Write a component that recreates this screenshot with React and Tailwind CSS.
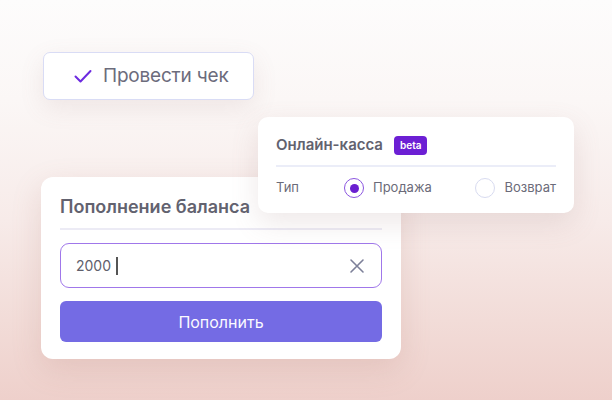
export default function App() {
  return (
    <div
      className="relative w-[612px] h-[400px] overflow-hidden bg-[linear-gradient(180deg,#fdfcfc_0%,#fbf7f6_25%,#f7ebe9_55%,#f2dcd8_80%,#eed0cb_100%)]"
      style={{ fontFamily: 'Inter, "Noto Sans", sans-serif' }}
    >
      {/* confirm button */}
      <div className="absolute left-[43px] top-[52px] w-[211px] h-[48px] flex items-center gap-[10px] pl-[29px] bg-white border border-[#d9dcf5] rounded-[7px] shadow-[0_8px_24px_rgba(150,110,110,0.12)]">
        <svg width="20" height="20" viewBox="0 0 20 20" fill="none">
          <path d="M2.5 10.5l5 5L17.5 5" stroke="#6d2be0" strokeWidth="2" strokeLinecap="round" strokeLinejoin="round" />
        </svg>
        <span className="text-[19px] text-[#6c6c7c] tracking-[-0.2px]">Провести чек</span>
      </div>

      {/* top-up card */}
      <div className="absolute left-[41px] top-[177px] w-[360px] h-[182px] bg-white rounded-[12px] shadow-[0_10px_30px_rgba(170,110,100,0.18)] px-[19px] pt-[19px]">
        <div className="text-[18px] font-semibold text-[#62626f] leading-[22px]">Пополнение баланса</div>
        <div className="mt-[10px] h-[2px] bg-[#ecebf5]" />
        <div className="mt-[13px] h-[45px] rounded-[9px] border border-[#a077ea] flex items-center pl-[15px] pr-[16px]">
          <span className="text-[14px] text-[#60606c]">2000</span>
          <span className="ml-[5px] w-[1.5px] h-[18px] bg-[#555]" />
          <svg className="ml-auto" width="16" height="16" viewBox="0 0 16 16" fill="none">
            <path d="M2 2l12 12M14 2L2 14" stroke="#7d8099" strokeWidth="1.6" strokeLinecap="round" />
          </svg>
        </div>
        <button className="mt-[13px] w-full h-[41px] rounded-[6px] bg-[#746be4] text-[#fbfaff] text-[16px] flex items-center justify-center">
          Пополнить
        </button>
      </div>

      {/* online kassa card */}
      <div className="absolute left-[258px] top-[117px] w-[316px] h-[96px] bg-white rounded-[10px] shadow-[0_10px_28px_rgba(150,110,110,0.16)] px-[18px] pt-[18px]">
        <div className="flex items-center gap-[11px]">
          <span className="text-[15px] font-semibold text-[#62626f] leading-[20px]">Онлайн-касса</span>
          <span className="h-[19px] px-[6px] rounded-[4px] bg-[#6c1fd4] text-white text-[10px] font-semibold flex items-center">beta</span>
        </div>
        <div className="mt-[10px] h-[2px] bg-[#ebedf8]" />
        <div className="mt-[11px] flex items-center text-[13px] text-[#6b6b79]">
          <span className="w-[68px]">Тип</span>
          <span className="w-[20px] h-[20px] rounded-full border border-[#8b55e0] flex items-center justify-center">
            <span className="w-[9px] h-[9px] rounded-full bg-[#6a1fd0]" />
          </span>
          <span className="ml-[9px]">Продажа</span>
          <span className="ml-auto w-[20px] h-[20px] rounded-full border border-[#d8dbf0]" />
          <span className="ml-[9px]">Возврат</span>
        </div>
      </div>
    </div>
  )
}
